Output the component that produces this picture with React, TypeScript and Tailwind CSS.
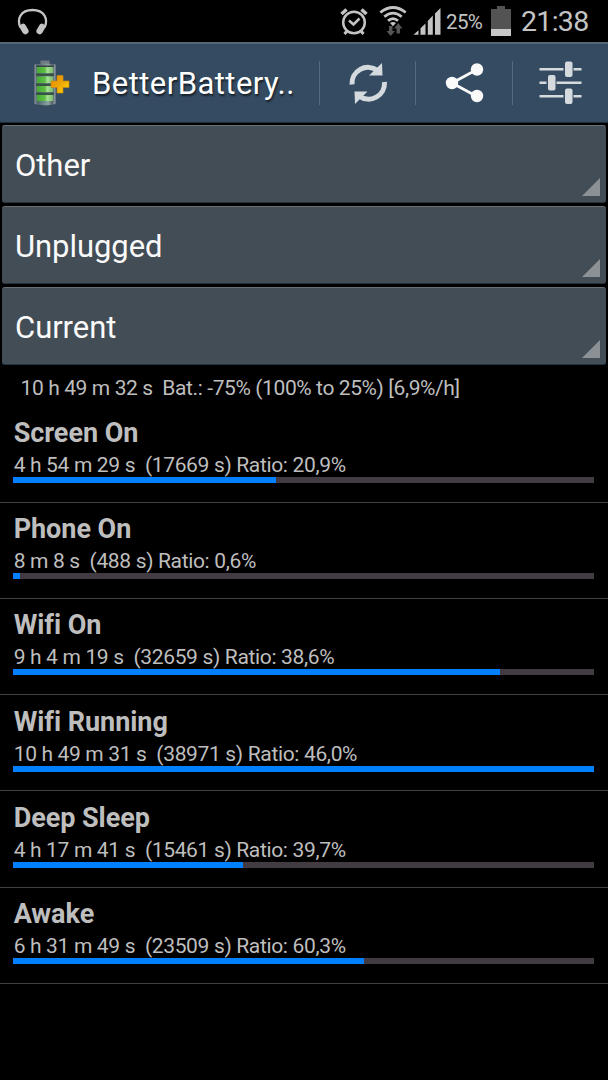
import type { ReactNode } from "react";

const filters = ["Other", "Unplugged", "Current"];

const stats = [
  { name: "Screen On", detail: "4 h 54 m 29 s  (17669 s) Ratio: 20,9%", width: 263 },
  { name: "Phone On", detail: "8 m 8 s  (488 s) Ratio: 0,6%", width: 7 },
  { name: "Wifi On", detail: "9 h 4 m 19 s  (32659 s) Ratio: 38,6%", width: 487 },
  { name: "Wifi Running", detail: "10 h 49 m 31 s  (38971 s) Ratio: 46,0%", width: 581 },
  { name: "Deep Sleep", detail: "4 h 17 m 41 s  (15461 s) Ratio: 39,7%", width: 230 },
  { name: "Awake", detail: "6 h 31 m 49 s  (23509 s) Ratio: 60,3%", width: 351 },
];

function StatusBar() {
  return (
    <div className="flex h-[42px] items-center text-[#c4c4c4]">
      <svg className="ml-[17px] h-[42px] w-8 shrink-0" viewBox="17 0 32 42" fill="none" stroke="#c4c4c4">
        <path d="M20.500 27.500C16.500 19 20.500 10 32.500 10S48.500 19 44.500 27.500" strokeWidth="2.300" />
        <path d="M23 27l2.300 4M42 27l-2.300 4" strokeWidth="6.500" strokeLinecap="round" />
      </svg>
      <svg className="ml-[291px] h-[42px] w-[102px] shrink-0" viewBox="340 0 102 42" fill="none" stroke="#c4c4c4">
        <circle cx="354" cy="22.500" r="10.800" strokeWidth="2.500" />
        <path d="M349 20.500l4.500 4 6-6" strokeWidth="2.500" />
        <path d="M341.500 14l5-4.500M366.500 14l-5-4.500" strokeWidth="3.500" />
        <path d="M347 31l-2.500 3M361 31l2.500 3" strokeWidth="3" />
        <path d="M380.300 12.500Q393 2.500 405.700 12.500" strokeWidth="2.800" />
        <path d="M384.300 16.800Q393 9.500 401.700 16.800" strokeWidth="2.800" />
        <path d="M388 20.800Q393 16.500 398 20.800" strokeWidth="2.800" />
        <path d="M390 23q3-2 6 0l-3 3.200z" fill="#c4c4c4" stroke="none" />
        <path d="M389 26h3.500v5h2.500l-4.300 5-4.200-5h2.500zM396.500 33.500v-5H394l4.300-5.500 4.200 5.500H400v5z" fill="#555" stroke="none" />
        <path d="M413.500 34.800l5-4.500v4.500zM420.500 28.300l5-4.700v11.200h-5zM427.800 21l5-5.500v19.300h-5zM435 13.500l5.500-5.500v26.800H435z" fill="#c4c4c4" stroke="none" />
      </svg>
      <span className="ml-1 w-[38px] whitespace-nowrap pt-[3px] text-[20.500px] tracking-[-0.6px]">25%</span>
      <svg className="ml-[7px] h-[42px] w-[21px] shrink-0" viewBox="491 0 21 42">
        <path d="M497 6h8v3h6v27h-20V9h6z" fill="#535353" />
        <path d="M491 29h20v7h-20z" fill="#c8c8c8" />
      </svg>
      <span className="ml-[9px] whitespace-nowrap pt-0.5 text-[28.500px] tracking-[-0.7px]">21:38</span>
    </div>
  );
}

function BatteryLogo() {
  return (
    <svg className="ml-8 h-12 w-10 shrink-0" viewBox="32 58 40 48">
      <defs>
        <linearGradient id="shell" x1="0" x2="1">
          <stop offset="0" stopColor="#8b979c" />
          <stop offset=".15" stopColor="#50666d" />
          <stop offset=".65" stopColor="#8ba5a2" />
          <stop offset=".85" stopColor="#57636b" />
          <stop offset="1" stopColor="#9aa4ac" />
        </linearGradient>
        <linearGradient id="cell" x1="0" x2="1">
          <stop offset="0" stopColor="#47aa35" />
          <stop offset=".5" stopColor="#5fbf45" />
          <stop offset=".65" stopColor="#a6df96" />
          <stop offset="1" stopColor="#79bd68" />
        </linearGradient>
        <linearGradient id="plus" x1="0" x2="1" y2="1">
          <stop offset="0" stopColor="#e58c00" />
          <stop offset=".5" stopColor="#eea504" />
          <stop offset="1" stopColor="#ffe000" />
        </linearGradient>
      </defs>
      <ellipse cx="45" cy="103" rx="9" ry="2" fill="#26394a" />
      <path d="M40.500 59.500h9V64h-9z" fill="#717a80" />
      <path d="M34.500 63.500q10.500-2 21 0V103q-10.500 3-21 0z" fill="url(#shell)" />
      <path d="M36 64.500h18V66H36z" fill="#3a4348" />
      <path d="M37 66h16v6H37zM37 75.500h16V82H37zM37 85h16v6H37zM37 94h16v6H37z" fill="url(#cell)" />
      <path d="M36 72.500h18v2.500H36zM36 82.500h18V85H36zM36 91.500h18V94H36z" fill="#365345" />
      <path d="M57 74.500h6v5.500h6v6.500h-6V92h-6v-5.500h-6V80h6z" fill="url(#plus)" stroke="#c78716" strokeWidth=".7" />
    </svg>
  );
}

function Action({ children }: { children: ReactNode }) {
  return (
    <div className="flex h-full w-[96.300px] shrink-0 items-center">
      <div className="h-11 w-px bg-[#546b7e]" />
      <div className="flex flex-1 justify-center">{children}</div>
    </div>
  );
}

function ActionBar() {
  return (
    <div className="flex h-[81px] items-center border-b border-t-2 border-b-[#202d38] border-t-[#536879] bg-[#344b61]">
      <BatteryLogo />
      <h1 className="ml-5 w-[227px] whitespace-nowrap pt-[3px] text-[31px] tracking-[0.45px] text-white [text-shadow:1px_2px_2px_#00000099]">
        BetterBattery..
      </h1>
      <Action>
        <svg className="h-11 w-11" viewBox="346 61 44 44" fill="none">
          <path d="M352 84.500a16 16 0 0 1 25.500-14" stroke="#d5dade" strokeWidth="5" />
          <path d="M382 63l.5 12.500H369z" fill="#d5dade" />
          <path d="M384.500 82a16 16 0 0 1-25.500 14" stroke="#d5dade" strokeWidth="5" />
          <path d="M354.500 91.500h13L355 104z" fill="#d5dade" />
        </svg>
      </Action>
      <Action>
        <svg className="h-11 w-11" viewBox="442 60.500 44 44" fill="#fafafa">
          <path d="M477 69l-25 13.500L477 96" fill="none" stroke="#fafafa" strokeWidth="2.800" />
          <circle cx="477" cy="69" r="6.200" />
          <circle cx="452" cy="82.500" r="6.200" />
          <circle cx="477" cy="95.500" r="6.200" />
        </svg>
      </Action>
      <Action>
        <svg className="h-11 w-11" viewBox="538.500 61 44 44" fill="#d5dade">
          <path d="M540 68h24v2.500h-24zM574 68h8v2.500h-8zM540 81.500h7V84h-7zM557 81.500h25V84h-25zM540 95h24v2.500h-24zM574 95h8v2.500h-8z" />
          <rect x="565.500" y="61.500" width="7.500" height="15.500" rx="2" />
          <rect x="548.500" y="75" width="7.500" height="15.500" rx="2" />
          <rect x="565.500" y="88.500" width="7.500" height="15.500" rx="2" />
        </svg>
      </Action>
    </div>
  );
}

export default function App() {
  return (
    <div className="h-[1080px] w-[608px] overflow-hidden bg-black font-[Roboto,sans-serif]">
      <StatusBar />
      <ActionBar />
      <div className="flex flex-col gap-[3px] px-0.5 pt-0.5">
        {filters.map((filter) => (
          <div
            key={filter}
            className="flex h-[78px] items-center justify-between rounded-[3px] border-b border-t border-b-[#26343f] border-t-[#687078] bg-[#434d56] pl-[13px] pr-1.5"
          >
            <span className="pt-1 text-[31px] tracking-[-0.05px] text-[#fafafa]">{filter}</span>
            <svg className="mb-1.5 h-[18px] w-[18px] self-end" viewBox="0 0 18 18">
              <path d="M18 0v18H0z" fill="#8b9195" />
            </svg>
          </div>
        ))}
      </div>
      <p className="mt-[7px] h-[34.600px] whitespace-pre pl-[20.500px] text-[21px] leading-8 tracking-[-0.39px] text-[#bebebe]">
        {"10 h 49 m 32 s  Bat.: -75% (100% to 25%) [6,9%/h]"}
      </p>
      {stats.map((stat) => (
        <section key={stat.name} className="h-[96.200px] border-b border-[#414141] px-[13px] pt-[10.400px]">
          <h2 className="h-8 pl-[0.700px] text-[27px] font-bold leading-8 tracking-[-0.05px] text-[#bebebe]">
            {stat.name}
          </h2>
          <p className="h-7 whitespace-pre pl-[0.700px] text-[21px] leading-8 tracking-[-0.34px] text-[#bebebe]">
            {stat.detail}
          </p>
          <div className="h-1.5 w-[581px] bg-[#423b42]">
            <div className="h-full bg-[#0080ff]" style={{ width: stat.width }} />
          </div>
        </section>
      ))}
    </div>
  );
}
